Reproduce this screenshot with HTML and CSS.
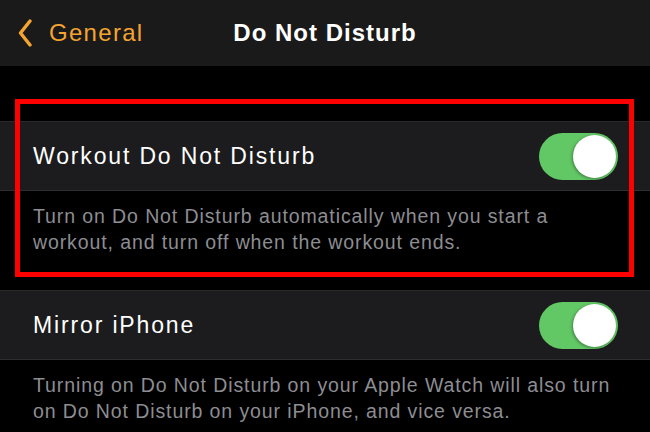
FILE: index.html
```html
<!DOCTYPE html>
<html lang="en">
<head>
    <meta charset="UTF-8">
    <meta name="viewport" content="width=device-width, initial-scale=1.0">
    <title>Do Not Disturb</title>
    <link rel="stylesheet" href="styles.css">
</head>
<body>
    <header class="barra">
        <a class="volver" href="#">
            <svg class="chevron" width="14" height="28" viewBox="0 0 14 28">
                <path d="M12 2 L2.5 14 L12 26" fill="none" stroke="#f4a531" stroke-width="3.4" stroke-linecap="round" stroke-linejoin="round"/>
            </svg>
            <span>General</span>
        </a>
        <h1>Do Not Disturb</h1>
    </header>

    <main class="ajustes">
        <div class="grupo">
            <div class="fila">
                <span class="etiqueta">Workout Do Not Disturb</span>
                <span class="interruptor"><span class="perilla"></span></span>
            </div>
            <p class="nota">Turn on Do Not Disturb automatically when you start a workout, and turn off when the workout ends.</p>
        </div>

        <div class="grupo">
            <div class="fila">
                <span class="etiqueta">Mirror iPhone</span>
                <span class="interruptor"><span class="perilla"></span></span>
            </div>
            <p class="nota ultima">Turning on Do Not Disturb on your Apple Watch will also turn on Do Not Disturb on your iPhone, and vice versa.</p>
        </div>

        <!-- recuadro rojo de la captura -->
        <div class="resaltado"></div>
    </main>
</body>
</html>
```

FILE: styles.css
```css
html, body {
    margin: 0;
    background: #000;
    overflow: hidden;
}

body {
    font-family: "Liberation Sans", Arial, sans-serif;
    color: #fff;
    width: 650px;
    height: 432px;
}

.barra {
    position: relative;
    height: 66px;
    background: #1a1a1a;
    display: flex;
    align-items: center;
    justify-content: center;
}

.barra h1 {
    margin: 0;
    font-size: 24px;
    font-weight: bold;
    letter-spacing: 1px;
}

.volver {
    position: absolute;
    left: 18px;
    top: 0;
    height: 66px;
    display: flex;
    align-items: center;
    gap: 17px;
    color: #f4a531;
    text-decoration: none;
    font-size: 24px;
    letter-spacing: 1.3px;
}

.chevron {
    display: block;
}

.ajustes {
    position: relative;
    padding-top: 55px;
}

.fila {
    height: 68px;
    background: #1c1c1e;
    border-top: 1px solid #29292b;
    border-bottom: 1px solid #2e2e30;
    display: flex;
    align-items: center;
    justify-content: space-between;
    padding: 0 32px 0 33px;
}

.etiqueta {
    font-size: 23px;
    letter-spacing: 1.85px;
}

.interruptor {
    width: 79px;
    height: 47px;
    border-radius: 24px;
    background: #62c765;
    display: flex;
    align-items: center;
    justify-content: flex-end;
    padding-right: 2px;
    box-sizing: border-box;
}

.perilla {
    width: 43px;
    height: 43px;
    border-radius: 50%;
    background: #fff;
    box-shadow: -1px 1px 3px rgba(0, 0, 0, 0.35);
}

.nota {
    margin: 0;
    padding: 12px 28px 35px 33px;
    font-size: 19.5px;
    line-height: 26px;
    letter-spacing: 0.9px;
    color: #8d8d92;
}

.nota.ultima {
    padding-bottom: 0;
}

.resaltado {
    position: absolute;
    left: 15px;
    top: 33px;
    width: 609px;
    height: 168px;
    border: 5px solid #ff0000;
}
```
